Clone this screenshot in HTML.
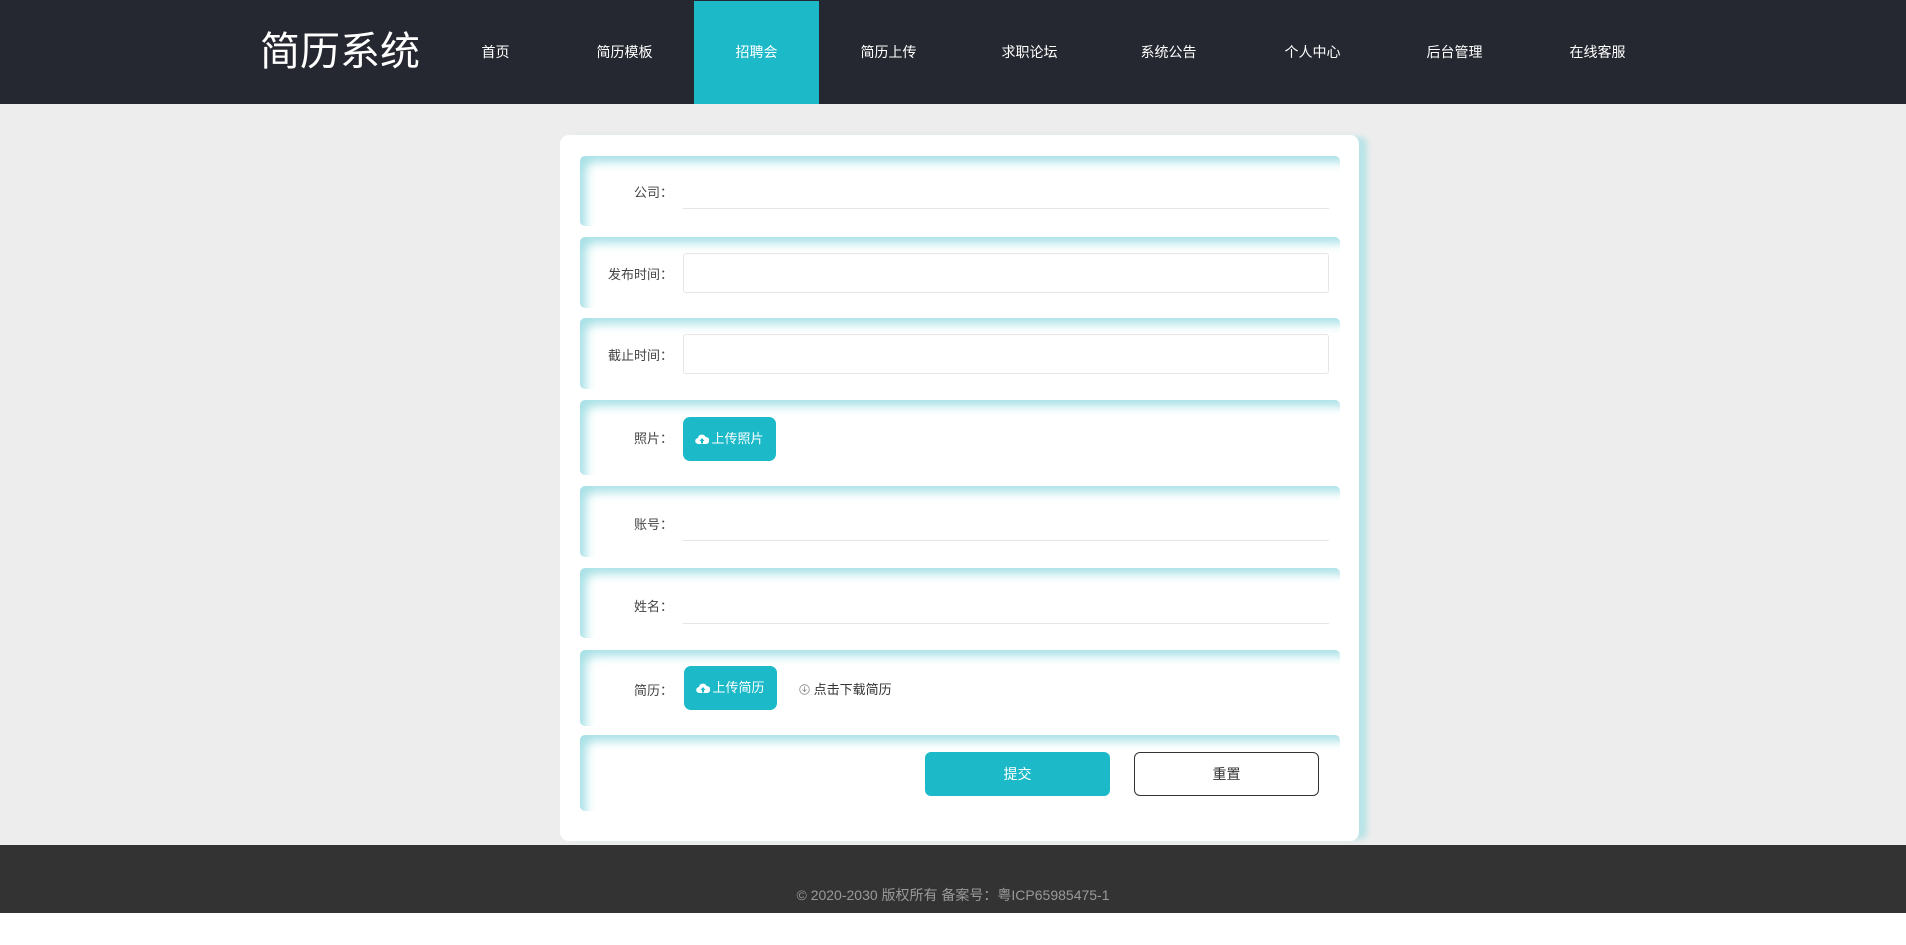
<!DOCTYPE html>
<html><head><meta charset="utf-8"><style>
*{margin:0;padding:0;box-sizing:border-box}
body{width:1906px;height:928px;background:#fff;font-family:"Liberation Sans","Noto Sans CJK SC",sans-serif;position:relative;overflow:hidden}
.bg{position:absolute;left:0;top:104px;width:1906px;height:741px;background:#ededed}
.hd{position:absolute;left:0;top:0;width:1906px;height:104px;background:#252830}
.logo{position:absolute;left:260px;top:26px;font-size:40px;color:#fff;line-height:52px}
.nav{position:absolute;top:1px;height:103px;width:125px;line-height:103px;text-align:center;color:#fff;font-size:14px}
.nav.on{background:#1cb9c8}
.card{position:absolute;left:560px;top:135px;width:799px;height:706px;background:#fff;border-radius:9px;box-shadow:10px 0 6px -2px #b8e4e8}
.row{position:absolute;left:20px;width:760px;border-radius:5px;box-shadow:inset 10px 10px 10px -4px #a7e1e6}
.lab{position:absolute;right:667px;font-size:13px;color:#444;white-space:nowrap}
.inp{position:absolute;left:103px;width:646px;height:40px;border:1px solid #e6e6e6;border-radius:3px;background:#fff}
.line{position:absolute;left:103px;width:646px;border-bottom:1px solid #e6e6e6}
.btn{position:absolute;background:#1cb9c8;color:#fff;border-radius:7px;font-size:13px;text-align:center}
.btn svg{vertical-align:-2px;margin-right:2px}
.ft{position:absolute;left:0;top:845px;width:1906px;height:68px;background:#333;color:#999;font-size:14px;text-align:center;line-height:100px}
</style></head><body>
<div class="bg"></div>
<div class="hd">
<div class="logo">简历系统</div>
<div class="nav" style="left:433px">首页</div>
<div class="nav" style="left:562px">简历模板</div>
<div class="nav on" style="left:694px">招聘会</div>
<div class="nav" style="left:826px">简历上传</div>
<div class="nav" style="left:967px">求职论坛</div>
<div class="nav" style="left:1106px">系统公告</div>
<div class="nav" style="left:1250px">个人中心</div>
<div class="nav" style="left:1392px">后台管理</div>
<div class="nav" style="left:1535px">在线客服</div>
</div>
<div class="card">
<div class="row" style="top:21px;height:70px"><div class="lab" style="top:26px">公司：</div><div class="line" style="top:52px"></div></div>
<div class="row" style="top:102px;height:71px"><div class="lab" style="top:27px">发布时间：</div><div class="inp" style="top:16px"></div></div>
<div class="row" style="top:183px;height:71px"><div class="lab" style="top:27px">截止时间：</div><div class="inp" style="top:16px"></div></div>
<div class="row" style="top:265px;height:75px"><div class="lab" style="top:28px">照片：</div><div class="btn" style="left:103px;top:17px;width:93px;height:44px;line-height:44px"><svg width="14" height="12" viewBox="0 0 14 12"><path d="M3.5 11A3 3 0 0 1 3 5a4 4 0 0 1 7.6-1A3.5 3.5 0 0 1 11 11z" fill="#fff"/><path d="M7 5l-2.5 3h1.5v2.5h2V8h1.5z" fill="#1cb9c8"/></svg>上传照片</div></div>
<div class="row" style="top:351px;height:71px"><div class="lab" style="top:28px">账号：</div><div class="line" style="top:54px"></div></div>
<div class="row" style="top:433px;height:70px"><div class="lab" style="top:28px">姓名：</div><div class="line" style="top:55px"></div></div>
<div class="row" style="top:515px;height:76px"><div class="lab" style="top:30px">简历：</div><div class="btn" style="left:104px;top:16px;width:93px;height:44px;line-height:44px"><svg width="14" height="12" viewBox="0 0 14 12"><path d="M3.5 11A3 3 0 0 1 3 5a4 4 0 0 1 7.6-1A3.5 3.5 0 0 1 11 11z" fill="#fff"/><path d="M7 5l-2.5 3h1.5v2.5h2V8h1.5z" fill="#1cb9c8"/></svg>上传简历</div><div style="position:absolute;left:219px;top:29px;font-size:13px;color:#333"><svg width="11" height="11" viewBox="0 0 11 11" style="vertical-align:-1px"><circle cx="5.5" cy="5.5" r="4.8" fill="none" stroke="#888" stroke-width=".8"/><path d="M5.5 2.5v5M3.5 5.5l2 2 2-2" fill="none" stroke="#888" stroke-width=".8"/></svg> 点击下载简历</div></div>
<div class="row" style="top:600px;height:76px">
<div class="btn" style="left:345px;top:17px;width:185px;height:44px;line-height:44px;border-radius:6px;font-size:14px">提交</div>
<div style="position:absolute;left:554px;top:17px;width:185px;height:44px;line-height:42px;border:1px solid #333;border-radius:6px;text-align:center;font-size:14px;color:#333">重置</div>
</div>
</div>
<div class="ft">© 2020-2030 版权所有 备案号：粤ICP65985475-1</div>
</body></html>
